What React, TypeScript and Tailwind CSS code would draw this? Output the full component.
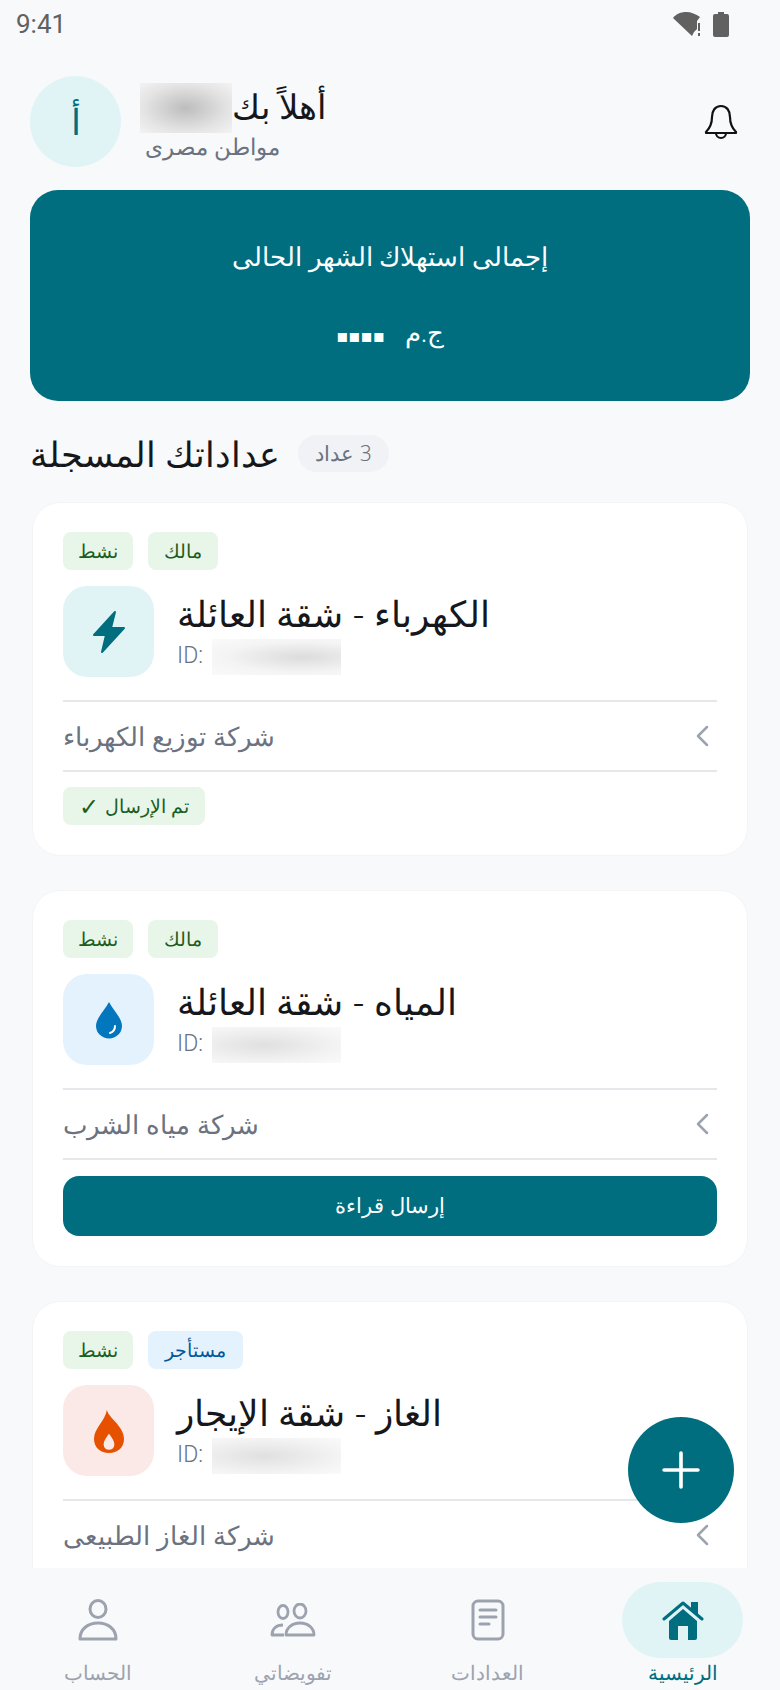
import { Plus } from "lucide-react";
import type { ReactNode } from "react";

function Badge({ children, blue }: { children: ReactNode; blue?: boolean }) {
  return (
    <span
      className={`flex h-[38px] items-center justify-center rounded-lg text-[19px] font-light ${
        blue ? "w-[95px] bg-[#e3f2fd] text-[#01579b]" : "w-[70px] bg-[#e8f5e9] text-[#1b5e20]"
      }`}
      dir="rtl"
    >
      {children}
    </span>
  );
}

function Bolt() {
  return (
    <svg width="34" height="44" viewBox="0 0 34 44">
      <path d="M23 2 2 25h12l-4 17 22-24H19z" fill="#006e7f" stroke="#006e7f" strokeWidth="2" strokeLinejoin="round" />
    </svg>
  );
}

function Drop() {
  return (
    <svg width="28" height="38" viewBox="0 0 28 38">
      <path d="M14 1C10 9 1 17 1 25a13 12.5 0 0 0 26 0C27 17 18 9 14 1z" fill="#0277bd" />
      <path d="M20 25c0 4-2 6-5 7" fill="none" stroke="#fff" strokeWidth="2" strokeLinecap="round" />
    </svg>
  );
}

function Flame() {
  return (
    <svg width="30" height="44" viewBox="0 0 28 41">
      <path d="M12 1C14 9 28 16 28 28 28 36 22 41 14 41 6 41 0 36 0 28 0 18 10 12 12 1z" fill="#e65100" />
      <path d="M14 23c3 4 5 7 5 10a5 5 0 0 1-10 0c0-3 2-6 5-10z" fill="#fbe9e7" />
    </svg>
  );
}

function MeterCard({
  title,
  company,
  icon,
  iconBg,
  badge,
  blue,
  blur,
  footer,
}: {
  title: string;
  company: string;
  icon: ReactNode;
  iconBg: string;
  badge: string;
  blue?: boolean;
  blur: string;
  footer?: ReactNode;
}) {
  return (
    <div className="shrink-0 rounded-[28px] border border-[#f3f4f6] bg-white px-[30px] pt-[29px] pb-[30px]">
      <div className="flex flex-row-reverse justify-end gap-[15px]">
        <Badge blue={blue}>{badge}</Badge>
        <Badge>نشط</Badge>
      </div>
      <div className="mt-4 flex items-center gap-[23px]">
        <div className={`flex h-[91px] w-[91px] items-center justify-center rounded-3xl ${iconBg}`}>{icon}</div>
        <div className="flex flex-col">
          <div dir="rtl" className="text-left text-[36px] leading-[50px] font-light text-[#15171a]">
            {title}
          </div>
          <div className="flex items-center gap-[5px] font-['Roboto'] text-[23px] font-light text-[#6b7280]">
            <span className="w-[30px]">ID:</span>
            <div className={`h-9 w-[129px] ${blur}`} />
          </div>
        </div>
      </div>
      <div className="mt-[23px] flex h-[72px] items-center justify-between border-y-2 border-[#e5e7eb]">
        <span dir="rtl" className="text-[26px] font-light text-[#6b7280]">
          {company}
        </span>
        <svg width="14" height="22" viewBox="0 0 14 22" className="mr-2">
          <path d="M12 2 3 11l9 9" fill="none" stroke="#9ca3af" strokeWidth="2.5" strokeLinecap="round" strokeLinejoin="round" />
        </svg>
      </div>
      {footer}
    </div>
  );
}

function NavItem({ label, active, children }: { label: string; active?: boolean; children: ReactNode }) {
  return (
    <div className="flex w-[195px] flex-col items-center pt-[14px]">
      <div className={`flex h-[76px] w-[121px] items-center justify-center rounded-full ${active ? "bg-[#e0f4f6]" : ""}`}>
        {children}
      </div>
      <span dir="rtl" className={`mt-0.5 text-[20px] leading-[26px] font-light ${active ? "text-[#006e7f]" : "text-[#9ca3af]"}`}>
        {label}
      </span>
    </div>
  );
}

export default function App() {
  return (
    <div className="relative flex h-[1690px] w-[780px] flex-col overflow-hidden bg-[#f8f9fb] font-['Noto_Sans','DejaVu_Sans',sans-serif]">
      <div className="flex h-[48px] shrink-0 items-center justify-between pr-[51px] pl-4 font-['Roboto'] text-[26px] text-[#616161]">
        <span>9:41</span>
        <div className="flex items-center gap-[10px]">
          <svg width="30" height="24" viewBox="0 0 30 24">
            <path d="M0 6C3 2 8 0 13 0c5 0 10 2 14 5l-3 4v8l-3 3-2 4z" fill="#616161" />
            <path d="M25 11h2v8h-2zM25 21h2v3h-2z" fill="#616161" />
          </svg>
          <svg width="16" height="25" viewBox="0 0 16 25">
            <path d="M5 0h6v2h3a2 2 0 0 1 2 2v19a2 2 0 0 1-2 2H2a2 2 0 0 1-2-2V4a2 2 0 0 1 2-2h3z" fill="#616161" />
          </svg>
        </div>
      </div>

      <div className="flex min-h-0 flex-1 flex-col overflow-hidden px-[30px] pt-[28px]">
        <div className="flex h-[91px] shrink-0 items-center justify-between">
          <div className="flex items-center gap-[19px]">
            <div className="flex h-[91px] w-[91px] items-center justify-center rounded-full bg-[#e0f4f6] text-[36px] font-light text-[#006e7f]">
              أ
            </div>
            <div className="flex flex-col">
              <div className="flex h-[50px] items-center">
                <div className="h-[50px] w-[92px] bg-[radial-gradient(ellipse_at_center,#bdbdbd_0%,#e4e4e4_65%,#f3f3f3_100%)]" />
                <span dir="rtl" className="-mt-1 text-[34px] font-light text-[#15171a]">
                  أهلاً بك
                </span>
              </div>
              <span dir="rtl" className="-mt-px pl-[5px] text-left text-[23px] leading-[28px] font-light text-[#6b7280]">
                مواطن مصرى
              </span>
            </div>
          </div>
          <svg width="34" height="36" viewBox="0 0 34 36" className="mr-3">
            <path
              d="M17 2c-6 0-9 5-9 11 0 7-2 11-6 15v1h30v-1c-4-4-6-8-6-15 0-6-3-11-9-11zM12 29a5 5 0 0 0 10 0"
              fill="none"
              stroke="#111"
              strokeWidth="2.2"
              strokeLinejoin="round"
            />
          </svg>
        </div>

        <div className="mt-[23px] flex h-[211px] shrink-0 flex-col items-center rounded-[28px] bg-[#006e7f] pt-[44px] text-white">
          <span dir="rtl" className="text-[26px] leading-[44px] font-light">
            إجمالى استهلاك الشهر الحالى
          </span>
          <span dir="rtl" className="mt-[32px] text-[26px] leading-[44px] font-light">
            ج.م<span className="mr-[20px] text-[18px] font-normal">▪▪▪▪</span>
          </span>
        </div>

        <div className="mt-[34px] flex h-[37px] shrink-0 items-center gap-[18px]">
          <span dir="rtl" className="text-[34.5px] font-light text-[#15171a]">
            عداداتك المسجلة
          </span>
          <span dir="rtl" className="flex h-[37px] w-[91px] items-center justify-center rounded-full bg-[#f1f2f6] text-[21px] font-light text-[#6b7280]">
            3 عداد
          </span>
        </div>

        <div className="mt-[30px] flex flex-col gap-[34px] px-[2px]">
          <MeterCard
            title="الكهرباء - شقة العائلة"
            company="شركة توزيع الكهرباء"
            icon={<Bolt />}
            iconBg="bg-[#e0f4f6]"
            badge="مالك"
            blur="bg-[radial-gradient(ellipse_at_70%_50%,#dcdcdc_0%,#f4f4f4_60%,#fafafa_100%)]"
            footer={
              <div className="mt-[15px] flex">
                <span dir="rtl" className="flex h-[38px] items-center gap-1.5 rounded-lg bg-[#e8f5e9] px-4 text-[19px] font-light text-[#1b5e20]">
                  تم الإرسال <span className="text-[24px] font-normal">✓</span>
                </span>
              </div>
            }
          />
          <MeterCard
            title="المياه - شقة العائلة"
            company="شركة مياه الشرب"
            icon={<Drop />}
            iconBg="bg-[#e3f2fd]"
            badge="مالك"
            blur="bg-[radial-gradient(ellipse_at_40%_50%,#e0e0e0_0%,#f4f4f4_70%,#fafafa_100%)]"
            footer={
              <div dir="rtl" className="mt-4 flex h-[60px] items-center justify-center rounded-2xl bg-[#006e7f] text-[21px] font-light text-white">
                إرسال قراءة
              </div>
            }
          />
          <MeterCard
            title="الغاز - شقة الإيجار"
            company="شركة الغاز الطبيعى"
            icon={<Flame />}
            iconBg="bg-[#fbe9e7]"
            badge="مستأجر"
            blue
            blur="bg-[radial-gradient(ellipse_at_40%_50%,#e0e0e0_0%,#f4f4f4_70%,#fafafa_100%)]"
          />
        </div>
      </div>

      <div className="flex h-[122px] shrink-0 flex-row-reverse bg-[#f8f9fb]">
        <NavItem label="الرئيسية" active>
          <svg width="42" height="40" viewBox="0 0 42 40">
            <path d="M29 2h7v14l-7-6z" fill="#006e7f" />
            <path d="M2 19 21 3l19 16" fill="none" stroke="#006e7f" strokeWidth="3" strokeLinecap="round" strokeLinejoin="round" />
            <path d="M7 21 21 9l14 12v17a2 2 0 0 1-2 2h-7V26h-10v14H9a2 2 0 0 1-2-2z" fill="#006e7f" />
          </svg>
        </NavItem>
        <NavItem label="العدادات">
          <svg width="34" height="42" viewBox="0 0 34 42" fill="none" stroke="#9ca3af" strokeWidth="3" strokeLinecap="round">
            <rect x="2" y="2" width="30" height="38" rx="5" />
            <path d="M9 11h16M9 18h16M9 25h9" />
          </svg>
        </NavItem>
        <NavItem label="تفويضاتي">
          <svg width="46" height="34" viewBox="0 0 46 34" fill="none" stroke="#9ca3af" strokeWidth="2.8" strokeLinejoin="round">
            <ellipse cx="13" cy="9" rx="5" ry="6.5" />
            <ellipse cx="30" cy="8" rx="6" ry="7" />
            <path d="M16 32c0-7 6-12 14-12s14 5 14 12z" />
            <path d="M14 32H2c0-6 4-10 11-10" />
          </svg>
        </NavItem>
        <NavItem label="الحساب">
          <svg width="40" height="42" viewBox="0 0 40 42" fill="none" stroke="#9ca3af" strokeWidth="3" strokeLinejoin="round">
            <ellipse cx="20" cy="10" rx="8" ry="8.5" />
            <path d="M2 40c0-10 8-16 18-16s18 6 18 16z" />
          </svg>
        </NavItem>
      </div>

      <div className="absolute top-[1417px] left-[628px] flex h-[106px] w-[106px] items-center justify-center rounded-full bg-[#006e7f] text-white">
        <Plus size={58} strokeWidth={1.5} />
      </div>
    </div>
  );
}
